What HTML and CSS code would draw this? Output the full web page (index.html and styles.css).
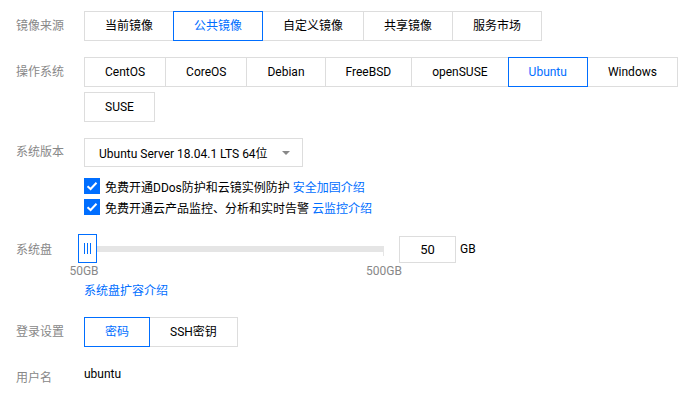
FILE: index.html
```html
<!DOCTYPE html>
<html lang="zh-CN">
<head>
  <meta charset="UTF-8">
  <title>镜像配置</title>
  <link rel="stylesheet" href="styles.css">
</head>
<body>
  <div class="form">

    <div class="row">
      <div class="label">镜像来源</div>
      <div class="btn-group">
        <span class="btn">当前镜像</span>
        <span class="btn selected">公共镜像</span>
        <span class="btn">自定义镜像</span>
        <span class="btn">共享镜像</span>
        <span class="btn">服务市场</span>
      </div>
    </div>

    <div class="row row-os">
      <div class="label">操作系统</div>
      <div class="btn-group">
        <span class="btn">CentOS</span>
        <span class="btn">CoreOS</span>
        <span class="btn">Debian</span>
        <span class="btn">FreeBSD</span>
        <span class="btn">openSUSE</span>
        <span class="btn selected">Ubuntu</span>
        <span class="btn">Windows</span>
        <span class="btn">SUSE</span>
      </div>
    </div>

    <div class="row row-version">
      <div class="label label-select">系统版本</div>
      <div class="content">
        <div class="select">
          <span>Ubuntu Server 18.04.1 LTS 64位</span>
          <span class="caret"></span>
        </div>
        <label class="check check-first">
          <span class="box"><svg width="12" height="10" viewBox="0 0 12 10"><path d="M1.5 5.2 L4.6 8 L10.5 1.8" fill="none" stroke="#fff" stroke-width="2"/></svg></span>
          <span class="check-text">免费开通DDos防护和云镜实例防护 <a href="#">安全加固介绍</a></span>
        </label>
        <label class="check">
          <span class="box"><svg width="12" height="10" viewBox="0 0 12 10"><path d="M1.5 5.2 L4.6 8 L10.5 1.8" fill="none" stroke="#fff" stroke-width="2"/></svg></span>
          <span class="check-text">免费开通云产品监控、分析和实时告警 <a href="#">云监控介绍</a></span>
        </label>
      </div>
    </div>

    <div class="row row-disk">
      <div class="label label-disk">系统盘</div>
      <div class="content">
        <div class="disk-line">
          <div class="slider">
            <div class="track"></div>
            <div class="tick"></div>
            <div class="thumb"><i></i><i></i><i></i></div>
          </div>
          <div class="num-input">50</div>
          <span class="unit">GB</span>
        </div>
        <div class="scale">
          <span class="min">50GB</span>
          <span class="max">500GB</span>
        </div>
        <a class="disk-link" href="#">系统盘扩容介绍</a>
      </div>
    </div>

    <div class="row row-login">
      <div class="label">登录设置</div>
      <div class="btn-group">
        <span class="btn selected">密码</span>
        <span class="btn">SSH密钥</span>
      </div>
    </div>

    <div class="row row-user">
      <div class="label label-user">用户名</div>
      <div class="value">ubuntu</div>
    </div>

  </div>
</body>
</html>
```

FILE: styles.css
```css
:root {
  --tc-blue: #006eff;
  --tc-border: #dddddd;
  --tc-gray: #888888;
  --tc-text: #000000;
}

body {
  margin: 0;
  background: #ffffff;
  font-family: Roboto, "Noto Sans CJK SC", sans-serif;
  font-size: 12px;
  color: var(--tc-text);
}

a {
  color: var(--tc-blue);
  text-decoration: none;
}

.form {
  padding: 11px 0 0 16px;
}

.row {
  display: flex;
  align-items: flex-start;
}

.label {
  width: 68px;
  flex: none;
  color: var(--tc-gray);
  line-height: 30px;
}

/* Button groups */
.btn-group {
  display: flex;
  flex-wrap: wrap;
  row-gap: 5px;
  width: 600px;
}

.btn {
  height: 30px;
  box-sizing: border-box;
  padding: 0 20px;
  line-height: 28px;
  border: 1px solid var(--tc-border);
  margin-right: -1px;
  background: #fff;
  white-space: nowrap;
}

.btn.selected {
  position: relative;
  z-index: 1;
  border-color: var(--tc-blue);
  color: var(--tc-blue);
}

.row-os {
  margin-top: 16px;
}

/* Version select */
.row-version {
  margin-top: 16px;
}

.label-select {
  line-height: 29px;
}

.select {
  width: 219px;
  height: 29px;
  box-sizing: border-box;
  border: 1px solid var(--tc-border);
  padding: 0 10px 0 14px;
  display: flex;
  align-items: center;
  justify-content: space-between;
}

.caret {
  width: 0;
  height: 0;
  border-left: 4px solid transparent;
  border-right: 4px solid transparent;
  border-top: 4px solid var(--tc-gray);
  margin-right: 2px;
}

.check {
  display: flex;
  align-items: center;
  height: 16px;
  margin-top: 5px;
}

.check-first {
  margin-top: 11px;
}

.check-text {
  white-space: nowrap;
}

.box {
  width: 16px;
  height: 16px;
  flex: none;
  background: var(--tc-blue);
  display: flex;
  align-items: center;
  justify-content: center;
  margin-right: 5px;
}

/* System disk */
.row-disk {
  margin-top: 19px;
}

.label-disk {
  line-height: 33px;
}

.disk-line {
  display: flex;
  align-items: flex-start;
}

.slider {
  position: relative;
  width: 300px;
  height: 29px;
}

.track {
  position: absolute;
  left: 0;
  right: 0;
  top: 12px;
  height: 6px;
  background: #e5e5e5;
}

.tick {
  position: absolute;
  right: 0;
  top: 18px;
  width: 1px;
  height: 4px;
  background: #e5e5e5;
}

.thumb {
  position: absolute;
  left: -6px;
  top: 0;
  width: 19px;
  height: 29px;
  box-sizing: border-box;
  border: 1px solid var(--tc-blue);
  background: #fff;
  display: flex;
  align-items: center;
  justify-content: center;
  gap: 2px;
}

.thumb i {
  width: 1px;
  height: 11px;
  background: var(--tc-blue);
}

.num-input {
  width: 57px;
  height: 27px;
  box-sizing: border-box;
  border: 1px solid var(--tc-border);
  margin: 2px 0 0 15px;
  text-align: center;
  line-height: 25px;
  font-size: 13px;
}

.unit {
  margin: 2px 0 0 4px;
  line-height: 27px;
}

.scale {
  position: relative;
  width: 300px;
  height: 14px;
  margin-top: 1px;
  color: var(--tc-gray);
  line-height: 14px;
}

.scale span {
  position: absolute;
  top: 0;
  transform: translateX(-50%);
}

.scale .min { left: 0; }
.scale .max { left: 300px; }

.disk-link {
  display: block;
  margin-top: 6px;
  line-height: 14px;
}

/* Login */
.row-login {
  margin-top: 19px;
}

.row-user {
  margin-top: 20px;
}

.label-user {
  line-height: 14px;
  margin-top: 4px;
}

.value {
  line-height: 14px;
}
```
